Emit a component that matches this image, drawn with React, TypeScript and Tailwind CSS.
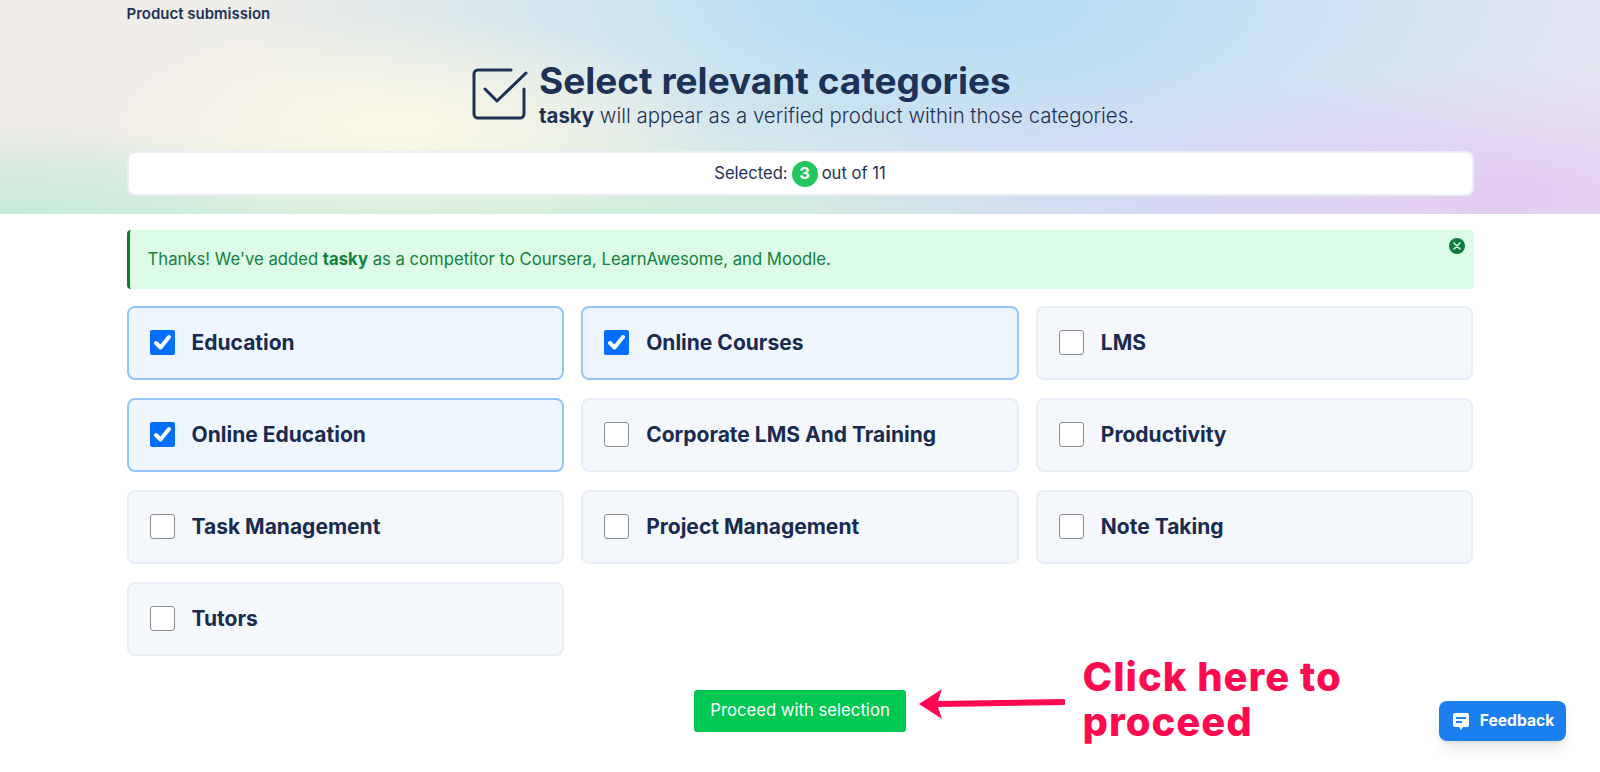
const categories = [
  { name: 'Education', on: true },
  { name: 'Online Courses', on: true },
  { name: 'LMS', on: false },
  { name: 'Online Education', on: true },
  { name: 'Corporate LMS And Training', on: false },
  { name: 'Productivity', on: false },
  { name: 'Task Management', on: false },
  { name: 'Project Management', on: false },
  { name: 'Note Taking', on: false },
  { name: 'Tutors', on: false },
]

function CategoryCard({ name, on }: { name: string; on: boolean }) {
  return (
    <div className={`flex h-[74px] items-center gap-[17px] rounded-lg border-2 px-[21px] ${on ? 'border-[#93c5fd] bg-[#eff6ff]' : 'border-[#e8eef6] bg-[#f4f7fb]'}`}>
      {on ? (
        <span className="flex size-[25px] items-center justify-center rounded-[2px] bg-[#006fff] text-white">
          <svg width="19" height="19" viewBox="0 0 19 19" fill="none" stroke="currentColor" strokeWidth="4" strokeLinecap="round" strokeLinejoin="round">
            <path d="M3 10l4.5 4.5L16 4" />
          </svg>
        </span>
      ) : (
        <span className="size-[25px] rounded-[3px] border border-[#8c8c8c] bg-white" />
      )}
      <span className="text-[21px] font-bold text-[#1a2b50]">{name}</span>
    </div>
  )
}

export default function App() {
  return (
    <div className="relative h-[772px] overflow-hidden bg-white font-['Inter',sans-serif] text-[#1e3257]">
      <header className="h-[214px] bg-[radial-gradient(ellipse_320px_110px_at_400px_125px,#fbf8e4_0%,transparent_100%),radial-gradient(ellipse_380px_130px_at_1500px_195px,#e4cbf2_0%,transparent_100%),radial-gradient(ellipse_400px_120px_at_1180px_190px,#d4d8f6_0%,transparent_100%),radial-gradient(ellipse_900px_105px_at_480px_232px,#c9efd9_0%,transparent_100%),radial-gradient(ellipse_320px_110px_at_0px_232px,#bfe6d6_0%,transparent_100%),radial-gradient(ellipse_700px_240px_at_930px_0px,#b4dcf6_0%,transparent_100%),linear-gradient(90deg,#f0ecea_0%,#eef0e6_40%,#d8e6ee_65%,#e6e6f2_100%)]">
        <div className="mx-auto w-[1347px]">
          <p className="pt-[6px] text-[15px] leading-[16px] font-semibold">Product submission</p>
          <div className="mt-[36px] flex justify-center gap-[11px] pl-[5px]">
            <svg width="56" height="52" viewBox="0 0 56 52" fill="none" stroke="currentColor" strokeWidth="3" strokeLinecap="round" strokeLinejoin="round" className="mt-[10px]">
              <path d="M39 2H6a4 4 0 0 0-4 4v40a4 4 0 0 0 4 4h42a4 4 0 0 0 4-4V21" />
              <path d="M13 21l12 12L54 5" />
            </svg>
            <div className="w-[594px]">
              <h1 className="text-[37px] leading-[46px] font-bold">Select relevant categories</h1>
              <p className="text-[20.4px] leading-[24px] font-light whitespace-nowrap"><b className="font-bold">tasky</b> will appear as a verified product within those categories.</p>
            </div>
          </div>
          <div className="mt-[23px] flex h-[45px] items-center justify-center gap-[4px] rounded-lg border-2 border-[#e8edf6] bg-white text-[16.6px]">
            <span>Selected:</span>
            <span className="flex size-[26px] items-center justify-center rounded-full bg-[#22c55e] font-bold text-white">3</span>
            <span>out of 11</span>
          </div>
        </div>
      </header>

      <main className="mx-auto w-[1347px] pt-[16px]">
        <div className="relative flex h-[59px] items-center rounded border-l-[3px] border-[#0f7a32] bg-[#dcfce7] pl-[18px] text-[16.7px] text-[#15803d]">
          <p>Thanks! We've added <b className="font-bold">tasky</b> as a competitor to Coursera, LearnAwesome, and Moodle.</p>
          <span className="absolute top-[8px] right-[9px] flex size-4 items-center justify-center rounded-full bg-[#0f7a3e] text-[#dcfce7]">
            <svg width="8" height="8" viewBox="0 0 8 8" stroke="currentColor" strokeWidth="1.5" strokeLinecap="round"><path d="M1 1l6 6M7 1L1 7" /></svg>
          </span>
        </div>

        <div className="mt-[16.5px] grid grid-cols-3 gap-x-[17px] gap-y-[18px]">
          {categories.map((c) => <CategoryCard key={c.name} name={c.name} on={c.on} />)}
        </div>

        <div className="relative mt-[34px] flex justify-center">
          <button className="h-[42px] w-[212px] rounded-[3px] bg-[#00c853] text-[16.7px] text-white">Proceed with selection</button>
          <div className="absolute top-[-36px] left-[792px] flex items-start gap-[18px]">
            <svg width="146" height="32" viewBox="0 0 146 32" className="mt-[34px] text-[#ff0a50]" fill="currentColor">
              <path d="M0 16L23 1l-4 12 125-2a2.5 2.5 0 0 1 0 6l-125 2 4 12z" />
            </svg>
            <p className="text-[40px] leading-[45px] font-extrabold tracking-[0.025em] whitespace-nowrap text-[#ff0a50]">Click here to<br />proceed</p>
          </div>
        </div>
      </main>

      <button className="absolute top-[701px] right-[34px] flex h-10 w-[127px] items-center justify-center gap-[10px] rounded-lg bg-[#1b7ff0] pl-[1px] text-[15.6px] font-bold text-white shadow-lg">
        <svg width="18" height="19" viewBox="0 0 18 19">
          <path fill="white" d="M3 1h12a2 2 0 0 1 2 2v10a2 2 0 0 1-2 2h-4l-2 3-2-3H3a2 2 0 0 1-2-2V3a2 2 0 0 1 2-2z" />
          <path fill="#1b7ff0" d="M4 5h10v2H4zM4 9h6v2H4z" />
        </svg>
        Feedback
      </button>
    </div>
  )
}
